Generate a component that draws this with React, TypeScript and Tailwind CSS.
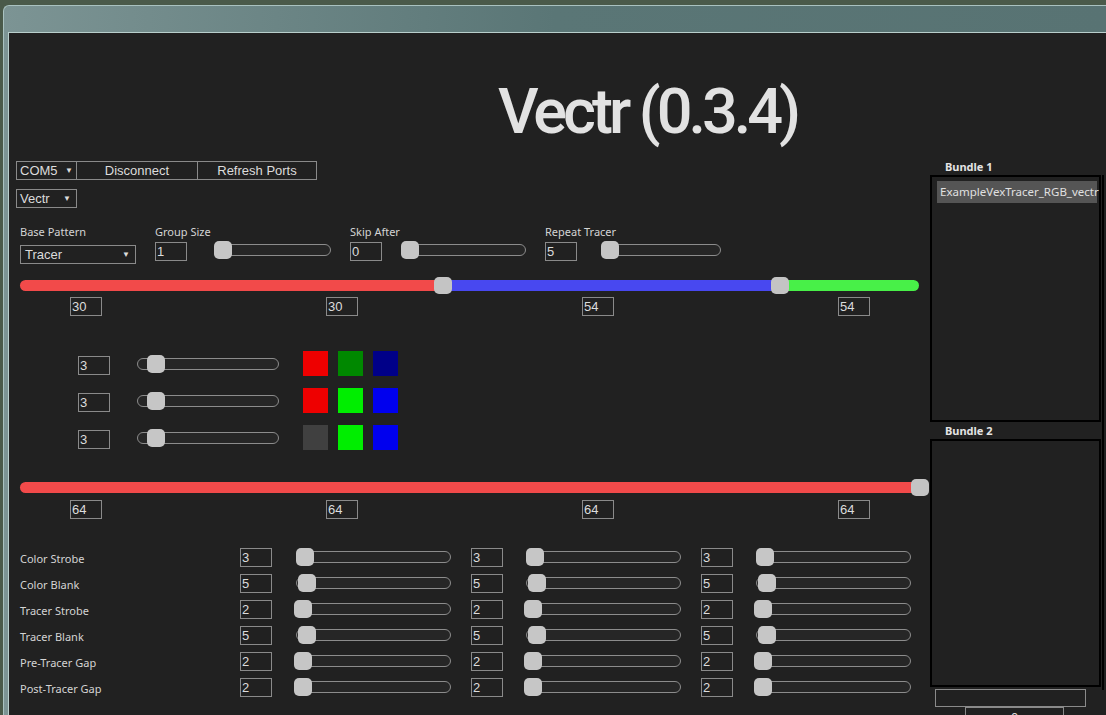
import React from "react";

const label = "font-['Noto_Sans',sans-serif] text-[11px] text-[#d4d4d4]";
const boxText = "font-['Liberation_Sans',Arial,sans-serif] text-[13px] text-[#dcdcdc]";

function NumBox({ value, className = "" }: { value: string | number; className?: string }) {
  return (
    <div
      className={`flex h-[19px] w-[32px] shrink-0 items-center border border-[#8a8a8a] pl-[1px] leading-none ${boxText} ${className}`}
    >
      {value}
    </div>
  );
}

function Slider({ width, thumb = 0, className = "" }: { width: number; thumb?: number; className?: string }) {
  return (
    <div
      className={`relative h-[12px] shrink-0 rounded-full border border-[#8c8c8c] bg-[#262626] ${className}`}
      style={{ width }}
    >
      <div
        className="absolute top-[-4px] h-[18px] w-[18px] rounded-[5px] bg-[#c6c6c6]"
        style={{ left: thumb - 1 }}
      />
    </div>
  );
}

function Thumb({ left }: { left: number }) {
  return (
    <div
      className="absolute top-[-3px] h-[17px] w-[18px] rounded-[5px] bg-[#c4c4c4]"
      style={{ left }}
    />
  );
}

const swatches = [
  ["#ee0000", "#008800", "#000088"],
  ["#ee0000", "#00ee00", "#0000ee"],
  ["#404040", "#00ee00", "#0000ee"],
];

const timings = [
  { name: "Color Strobe", values: [3, 3, 3], thumb: 0 },
  { name: "Color Blank", values: [5, 5, 5], thumb: 2 },
  { name: "Tracer Strobe", values: [2, 2, 2], thumb: -2 },
  { name: "Tracer Blank", values: [5, 5, 5], thumb: 2 },
  { name: "Pre-Tracer Gap", values: [2, 2, 2], thumb: -2 },
  { name: "Post-Tracer Gap", values: [2, 2, 2], thumb: -2 },
];

function NumRow({ values, className = "" }: { values: number[]; className?: string }) {
  return (
    <div className={`flex h-[19px] shrink-0 gap-[224px] pl-[61px] ${className}`}>
      {values.map((v, i) => (
        <NumBox key={i} value={v} />
      ))}
    </div>
  );
}

export default function App() {
  return (
    <div className="h-[715px] w-[1106px] overflow-hidden bg-[#4a5a4a] pl-[3px] pt-[5px]">
      <div className="h-full w-full rounded-tl-[6px] border-l border-t border-[#a9c2c0] bg-gradient-to-r from-[#7c9494] via-[#5a7676] to-[#587373] pl-[4px] pt-[26px]">
        <div className="flex h-full w-full overflow-hidden border-l border-t border-[#b9cfcc] bg-[#212121]">
          {/* left column */}
          <div className="flex w-[921px] shrink-0 flex-col">
            <div className="h-[128px] shrink-0 pl-[489px] pt-[47px]">
              <h1 className="h-[64px] font-['Roboto',sans-serif] text-[63px] font-medium leading-[64px] tracking-[-4px] text-[#e2e2e2]">
                Vectr (0.3.4)
              </h1>
            </div>

            <div className={`ml-[7px] flex h-[19px] shrink-0 ${boxText}`}>
              <div className="flex w-[61px] items-center justify-between border border-[#8a8a8a] pl-[3px] pr-[3px]">
                <span>COM5</span>
                <span className="text-[8px]">▼</span>
              </div>
              <div className="flex w-[121px] items-center justify-center border border-l-0 border-[#8a8a8a]">Disconnect</div>
              <div className="flex w-[119px] items-center justify-center border border-l-0 border-[#8a8a8a]">Refresh Ports</div>
            </div>

            <div className={`ml-[7px] mt-[9px] flex h-[19px] w-[61px] shrink-0 items-center justify-between border border-[#8a8a8a] px-[3px] pr-[5px] ${boxText}`}>
              <span>Vectr</span>
              <span className="text-[8px]">▼</span>
            </div>

            <div className="ml-[11px] mt-[17px] flex h-[38px] shrink-0">
              <div className="w-[135px]">
                <div className={`h-[14px] leading-[14px] ${label}`}>Base Pattern</div>
                <div className={`mt-[6px] flex h-[19px] w-[116px] items-center justify-between border border-[#8a8a8a] pl-[4px] pr-[5px] ${boxText}`}>
                  <span>Tracer</span>
                  <span className="text-[8px]">▼</span>
                </div>
              </div>
              <div className="w-[195px]">
                <div className={`h-[14px] leading-[14px] ${label}`}>Group Size</div>
                <div className="mt-[3px] flex items-center">
                  <NumBox value={1} />
                  <Slider width={117} className="ml-[27px] -mt-[4px]" />
                </div>
              </div>
              <div className="w-[195px]">
                <div className={`h-[14px] leading-[14px] ${label}`}>Skip After</div>
                <div className="mt-[3px] flex items-center">
                  <NumBox value={0} />
                  <Slider width={125} className="ml-[19px] -mt-[4px]" />
                </div>
              </div>
              <div className="w-[195px]">
                <div className={`h-[14px] leading-[14px] ${label}`}>Repeat Tracer</div>
                <div className="mt-[3px] flex items-center">
                  <NumBox value={5} />
                  <Slider width={120} className="ml-[24px] -mt-[4px]" />
                </div>
              </div>
            </div>

            {/* bar 1 */}
            <div className="relative ml-[11px] mt-[17px] flex h-[11px] w-[899px] shrink-0">
              <div className="h-full w-[423px] rounded-l-full bg-[#f24a4a]" />
              <div className="h-full w-[337px] bg-[#4848f0]" />
              <div className="h-full flex-1 rounded-r-full bg-[#48f048]" />
              <Thumb left={414} />
              <Thumb left={751} />
            </div>
            <NumRow values={[30, 30, 54, 54]} className="mt-[6px]" />

            {/* colour rows */}
            <div className="mt-[29px] flex shrink-0 flex-col">
              {swatches.map((row, i) => (
                <div key={i} className="flex h-[37px] items-center">
                  <NumBox value={3} className="ml-[69px] mt-[4px]" />
                  <Slider width={142} thumb={10} className="ml-[27px]" />
                  <div className="ml-[24px] flex gap-[10px]">
                    {row.map((c, j) => (
                      <div key={j} className="h-[25px] w-[25px]" style={{ backgroundColor: c }} />
                    ))}
                  </div>
                </div>
              ))}
            </div>

            {/* bar 2 */}
            <div className="relative ml-[11px] mt-[26px] h-[11px] w-[899px] shrink-0 rounded-full bg-[#f24a4a]">
              <Thumb left={891} />
            </div>
            <NumRow values={[64, 64, 64, 64]} className="mt-[7px]" />

            {/* timings */}
            <div className="mt-[25px] flex shrink-0 flex-col">
              {timings.map((t) => (
                <div key={t.name} className="flex h-[26px] items-center">
                  <div className={`ml-[11px] w-[220px] pt-[4px] ${label}`}>{t.name}</div>
                  <NumBox value={t.values[0]} />
                  <Slider width={155} thumb={t.thumb} className="ml-[24px]" />
                  <NumBox value={t.values[1]} className="ml-[20px]" />
                  <Slider width={155} thumb={t.thumb} className="ml-[23px]" />
                  <NumBox value={t.values[2]} className="ml-[20px]" />
                  <Slider width={155} thumb={t.thumb} className="ml-[23px]" />
                </div>
              ))}
            </div>
          </div>

          {/* right column */}
          <div className="flex shrink-0 flex-col pt-[126px]">
            <div className="h-[16px] shrink-0 pl-[15px] font-['Noto_Sans',sans-serif] text-[11px] font-bold leading-[16px] text-[#e4e4e4]">
              Bundle 1
            </div>
            <div className="h-[247px] w-[171px] shrink-0 border-2 border-black bg-[#212121] pl-[5px] pt-[4px]">
              <div className="flex h-[22px] w-[160px] items-center bg-[#555555] pl-[3px] font-['Noto_Sans',sans-serif] text-[11.5px] text-[#e0e0e0]">
                ExampleVexTracer_RGB_vectr
              </div>
            </div>
            <div className="h-[17px] shrink-0 pl-[15px] font-['Noto_Sans',sans-serif] text-[11px] font-bold leading-[17px] text-[#e4e4e4]">
              Bundle 2
            </div>
            <div className="h-[248px] w-[171px] shrink-0 border-2 border-black bg-[#212121]" />
            <div className="ml-[5px] mt-[2px] h-[18px] w-[151px] shrink-0 border border-[#8a8a8a]" />
            <div className={`ml-[35px] flex h-[18px] w-[99px] shrink-0 justify-center border border-[#8a8a8a] ${boxText}`}>0</div>
          </div>
          <div className="ml-[1px] mt-[142px] h-[515px] w-[2px] shrink-0 bg-black" />
        </div>
      </div>
    </div>
  );
}
